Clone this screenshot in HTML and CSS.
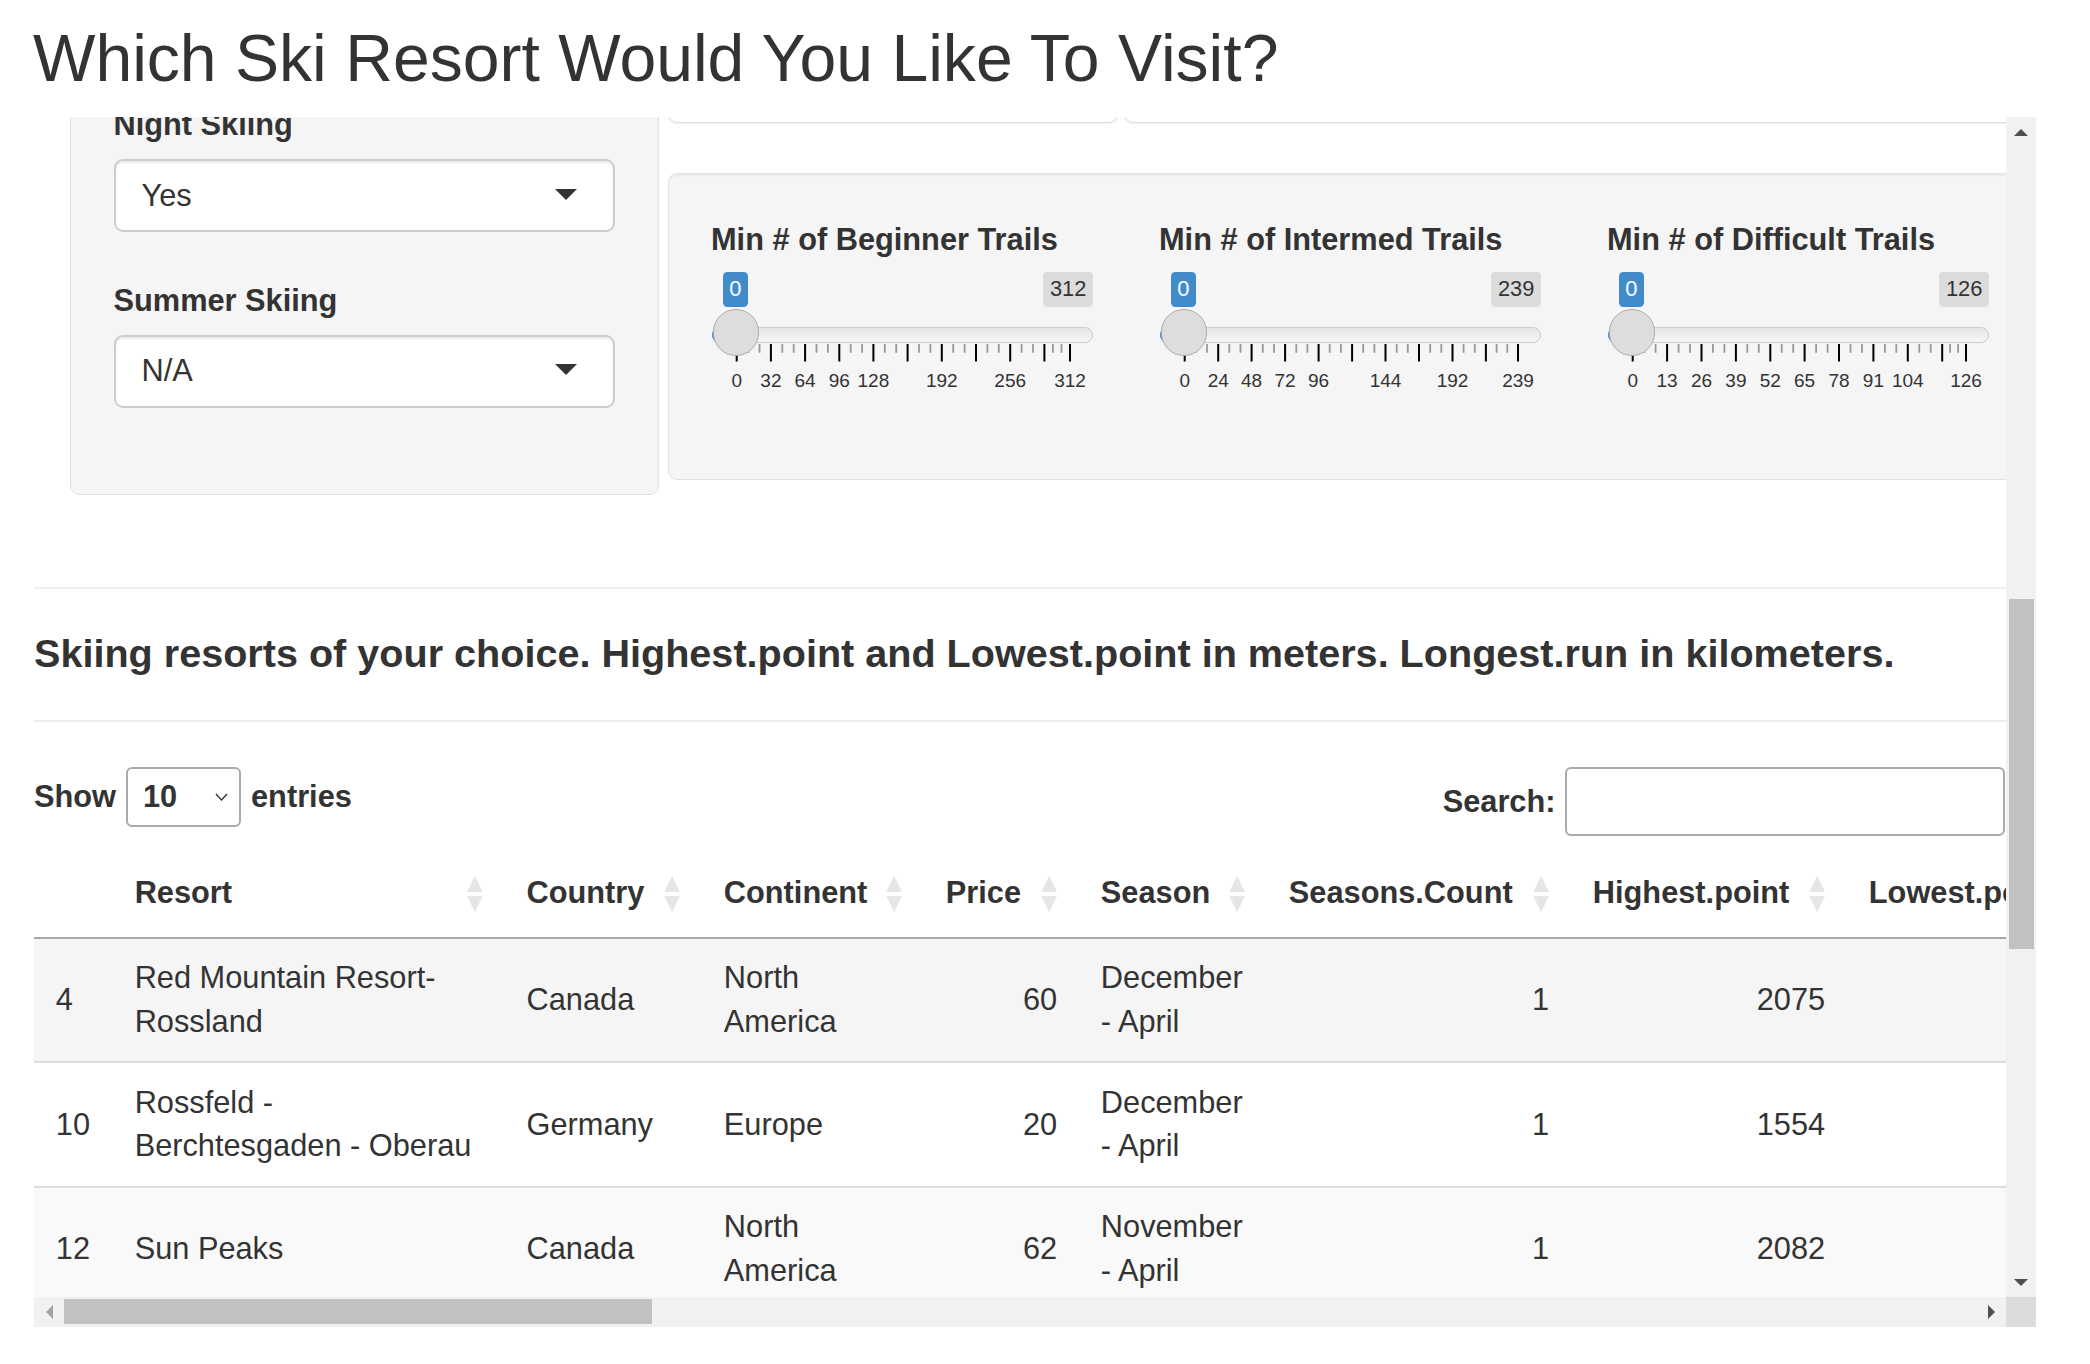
FILE: index.html
```html
<!DOCTYPE html>
<html>
<head>
<meta charset="utf-8">
<title>Ski Resorts</title>
<link rel="stylesheet" href="styles.css">
</head>
<body>
<div class="page">
  <h2 class="title">Which Ski Resort Would You Like To Visit?</h2>
  <div class="scrollbox">
    <div class="viewport">
      <div class="content">
        <div class="top-row">
          <div class="well sidebar">
            <div class="form-group">
              <label class="control-label">Night Skiing</label>
              <div class="selectize"><span>Yes</span><span class="caret"></span></div>
            </div>
            <div class="form-group">
              <label class="control-label">Summer Skiing</label>
              <div class="selectize"><span>N/A</span><span class="caret"></span></div>
            </div>
          </div>
          <div class="main">
            <div class="panels">
              <div class="panel panel-a"></div>
              <div class="panel panel-b"></div>
            </div>
            <div class="well sliders">
              <div class="slider-col">
                <label class="control-label">Min # of Beginner Trails</label>
                <div class="irs">
                  <svg class="grid" width="382" height="50" viewBox="0 0 382 50">
                    <path class="major" d="M25.7 0V17.6M59.9 0V17.6M94.1 0V17.6M128.3 0V17.6M162.4 0V17.6M196.6 0V17.6M230.8 0V17.6M265 0V17.6M299.2 0V17.6M333.4 0V17.6M359 0V17.6"/>
                    <path class="minor" d="M37.1 0V8.8M48.5 0V8.8M71.3 0V8.8M82.7 0V8.8M105.5 0V8.8M116.9 0V8.8M139.7 0V8.8M151.1 0V8.8M173.8 0V8.8M185.2 0V8.8M208 0V8.8M219.4 0V8.8M242.2 0V8.8M253.6 0V8.8M276.4 0V8.8M287.8 0V8.8M310.6 0V8.8M322 0V8.8M341.9 0V8.8M350.5 0V8.8"/>
                    <text x="25.7" y="43">0</text><text x="59.9" y="43">32</text><text x="94.1" y="43">64</text><text x="128.3" y="43">96</text><text x="162.4" y="43">128</text><text x="230.8" y="43">192</text><text x="299.2" y="43">256</text><text x="359" y="43">312</text>
                  </svg>
                  <span class="irs-line"></span>
                  <span class="irs-bar-edge"></span>
                  <span class="irs-handle"></span>
                  <span class="bubble irs-single">0</span>
                  <span class="bubble irs-max">312</span>
                </div>
              </div>
              <div class="slider-col">
                <label class="control-label">Min # of Intermed Trails</label>
                <div class="irs">
                  <svg class="grid" width="382" height="50" viewBox="0 0 382 50">
                    <path class="major" d="M25.7 0V17.6M59.2 0V17.6M92.6 0V17.6M126.1 0V17.6M159.6 0V17.6M193.1 0V17.6M226.5 0V17.6M260 0V17.6M293.5 0V17.6M326.9 0V17.6M359 0V17.6"/>
                    <path class="minor" d="M36.9 0V8.8M48 0V8.8M70.3 0V8.8M81.5 0V8.8M103.8 0V8.8M115 0V8.8M137.3 0V8.8M148.4 0V8.8M170.7 0V8.8M181.9 0V8.8M204.2 0V8.8M215.4 0V8.8M237.7 0V8.8M248.8 0V8.8M271.2 0V8.8M282.3 0V8.8M304.6 0V8.8M315.8 0V8.8M337.6 0V8.8M348.3 0V8.8"/>
                    <text x="25.7" y="43">0</text><text x="59.2" y="43">24</text><text x="92.6" y="43">48</text><text x="126.1" y="43">72</text><text x="159.6" y="43">96</text><text x="226.5" y="43">144</text><text x="293.5" y="43">192</text><text x="359" y="43">239</text>
                  </svg>
                  <span class="irs-line"></span>
                  <span class="irs-bar-edge"></span>
                  <span class="irs-handle"></span>
                  <span class="bubble irs-single">0</span>
                  <span class="bubble irs-max">239</span>
                </div>
              </div>
              <div class="slider-col">
                <label class="control-label">Min # of Difficult Trails</label>
                <div class="irs">
                  <svg class="grid" width="382" height="50" viewBox="0 0 382 50">
                    <path class="major" d="M25.7 0V17.6M60.1 0V17.6M94.5 0V17.6M128.9 0V17.6M163.3 0V17.6M197.6 0V17.6M232 0V17.6M266.4 0V17.6M300.8 0V17.6M335.2 0V17.6M359 0V17.6"/>
                    <path class="minor" d="M37.2 0V8.8M48.6 0V8.8M71.6 0V8.8M83 0V8.8M105.9 0V8.8M117.4 0V8.8M140.3 0V8.8M151.8 0V8.8M174.7 0V8.8M186.2 0V8.8M209.1 0V8.8M220.6 0V8.8M243.5 0V8.8M255 0V8.8M277.9 0V8.8M289.3 0V8.8M312.3 0V8.8M323.7 0V8.8M343.1 0V8.8M351.1 0V8.8"/>
                    <text x="25.7" y="43">0</text><text x="60.1" y="43">13</text><text x="94.5" y="43">26</text><text x="128.9" y="43">39</text><text x="163.3" y="43">52</text><text x="197.6" y="43">65</text><text x="232" y="43">78</text><text x="266.4" y="43">91</text><text x="300.8" y="43">104</text><text x="359" y="43">126</text>
                  </svg>
                  <span class="irs-line"></span>
                  <span class="irs-bar-edge"></span>
                  <span class="irs-handle"></span>
                  <span class="bubble irs-single">0</span>
                  <span class="bubble irs-max">126</span>
                </div>
              </div>
            </div>
          </div>
        </div>

        <hr class="rule rule-1">
        <h4 class="table-title">Skiing resorts of your choice. Highest.point and Lowest.point in meters. Longest.run in kilometers.</h4>
        <hr class="rule rule-2">

        <div class="dt-controls">
          <div class="dt-length">
            <span>Show</span>
            <div class="dt-select"><span>10</span>
              <svg class="chev" width="13" height="8" viewBox="0 0 13 8"><polyline points="1,1 6.5,7 12,1"/></svg>
            </div>
            <span>entries</span>
          </div>
          <div class="dt-filter">
            <span>Search:</span>
            <div class="dt-input"></div>
          </div>
        </div>

        <table class="dt">
          <colgroup>
            <col class="w-num"><col class="w-resort"><col class="w-country"><col class="w-continent"><col class="w-price"><col class="w-season"><col class="w-count"><col class="w-high"><col class="w-low">
          </colgroup>
          <thead>
            <tr>
              <th></th>
              <th class="sort">Resort</th>
              <th class="sort">Country</th>
              <th class="sort">Continent</th>
              <th class="sort">Price</th>
              <th class="sort">Season</th>
              <th class="sort">Seasons.Count</th>
              <th class="sort">Highest.point</th>
              <th class="sort">Lowest.point</th>
            </tr>
          </thead>
          <tbody>
            <tr class="row-hover">
              <td>4</td>
              <td>Red Mountain Resort-Rossland</td>
              <td>Canada</td>
              <td>North America</td>
              <td class="num">60</td>
              <td>December - April</td>
              <td class="num">1</td>
              <td class="num">2075</td>
              <td class="num">1185</td>
            </tr>
            <tr>
              <td>10</td>
              <td>Rossfeld - Berchtesgaden - Oberau</td>
              <td>Germany</td>
              <td>Europe</td>
              <td class="num">20</td>
              <td>December - April</td>
              <td class="num">1</td>
              <td class="num">1554</td>
              <td class="num">1000</td>
            </tr>
            <tr class="row-odd">
              <td>12</td>
              <td>Sun Peaks</td>
              <td>Canada</td>
              <td>North America</td>
              <td class="num">62</td>
              <td>November - April</td>
              <td class="num">1</td>
              <td class="num">2082</td>
              <td class="num">1255</td>
            </tr>
          </tbody>
        </table>
      </div>
    </div>

    <div class="vbar">
      <div class="sb-btn"><svg width="14" height="7" viewBox="0 0 14 7"><polygon class="arrow" points="0,7 14,7 7,0"/></svg></div>
      <div class="vtrack"><div class="vthumb"></div></div>
      <div class="sb-btn"><svg width="14" height="7" viewBox="0 0 14 7"><polygon class="arrow" points="0,0 14,0 7,7"/></svg></div>
    </div>
    <div class="hbar">
      <div class="sb-btn"><svg width="7" height="14" viewBox="0 0 7 14"><polygon class="arrow disabled" points="7,0 7,14 0,7"/></svg></div>
      <div class="htrack"><div class="hthumb"></div></div>
      <div class="sb-btn"><svg width="7" height="14" viewBox="0 0 7 14"><polygon class="arrow" points="0,0 0,14 7,7"/></svg></div>
    </div>
    <div class="corner"></div>
  </div>
</div>
</body>
</html>
```

FILE: styles.css
```css
html, body {
  margin: 0;
  background: #fff;
}
body {
  font-family: "Liberation Sans", Arial, sans-serif;
  font-size: 30.75px;
  line-height: 43.7px;
  color: #333;
}
.page {
  padding-left: 34px;
}
.title {
  margin: 0 0 0 -1px;
  padding: 22px 0 23px;
  font-size: 66.1px;
  line-height: 72px;
  font-weight: normal;
  white-space: nowrap;
}

/* scroll container drawn with classic scrollbars */
.scrollbox {
  display: grid;
  grid-template-columns: 1972px 30px;
  grid-template-rows: 1180px 30px;
}
.viewport {
  overflow: hidden;
}
.content {
  margin-top: -59px;
}

/* top area */
.top-row {
  display: flex;
  align-items: flex-start;
}
.well {
  background: #f5f5f5;
  border: 1px solid #e3e3e3;
  border-radius: 9px;
  box-shadow: inset 0 2px 2px rgba(0, 0, 0, 0.05);
  box-sizing: border-box;
}
.sidebar {
  flex: none;
  margin-left: 35.5px;
  width: 589px;
  height: 437px;
  padding: 42px 43px 0;
}
.control-label {
  display: block;
  font-weight: bold;
  white-space: nowrap;
}
.sidebar .control-label {
  padding-top: 2px;
  margin-bottom: 12.3px;
}
.form-group {
  margin-bottom: 44.5px;
}
.selectize {
  height: 73px;
  box-sizing: border-box;
  border: 2px solid #ccc;
  border-radius: 9px;
  background: #fff;
  box-shadow: inset 0 2px 2px rgba(0, 0, 0, 0.075);
  display: flex;
  align-items: center;
  justify-content: space-between;
  padding: 0 36px 0 26px;
}
.caret {
  width: 0;
  height: 0;
  margin-top: -3px;
  border-style: solid;
  border-width: 11px 11px 0;
  border-color: #333 transparent transparent;
}

.main {
  flex: none;
  margin-left: 9px;
}
.panels {
  display: flex;
  gap: 6.5px;
}
.panel {
  height: 65px;
  box-sizing: border-box;
  background: #fff;
  border: 1.5px solid #ddd;
  border-radius: 9px;
  box-shadow: 0 1px 2px rgba(0, 0, 0, 0.06);
}
.panel-a { width: 450px; }
.panel-b { width: 900px; }

.sliders {
  margin-top: 50px;
  width: 1380px;
  height: 307px;
  padding: 42px 0 0 42.5px;
  display: flex;
  gap: 66px;
}
.slider-col {
  flex: none;
  width: 382px;
}
.slider-col .control-label {
  padding-top: 1.5px;
  margin-bottom: 0;
}
.irs {
  position: relative;
  height: 200px;
}
.grid {
  position: absolute;
  left: 0;
  top: 82.8px;
  overflow: visible;
}
.grid .major {
  stroke: #000;
  stroke-width: 2;
  fill: none;
}
.grid .minor {
  stroke: #999;
  stroke-width: 1.8;
  fill: none;
}
.grid text {
  font-family: "Liberation Sans", Arial, sans-serif;
  font-size: 19px;
  fill: #333;
  text-anchor: middle;
}
.irs-line {
  position: absolute;
  left: 1px;
  top: 65.8px;
  width: 381px;
  height: 16px;
  box-sizing: border-box;
  border: 1.5px solid #ccc;
  border-radius: 8px;
  background: linear-gradient(to bottom, #ddd -50%, #fff 150%);
}
.irs-bar-edge {
  position: absolute;
  left: 1px;
  top: 65.8px;
  width: 24px;
  height: 16px;
  background: #428bca;
  border-radius: 8px 0 0 8px;
}
.irs-handle {
  position: absolute;
  left: 1.7px;
  top: 47.8px;
  width: 46.5px;
  height: 46.5px;
  box-sizing: border-box;
  border: 1.5px solid #aaa;
  border-radius: 50%;
  background: #ddd;
}
.bubble {
  position: absolute;
  top: 10.8px;
  font-size: 21.85px;
  line-height: 30.6px;
  padding: 2.2px 6.6px;
  border-radius: 4.4px;
}
.irs-single {
  left: 11.7px;
  background: #428bca;
  color: #fff;
}
.irs-max {
  right: 0;
  background: #dcdcdc;
  color: #333;
}

/* headings and rules */
.rule {
  border: 0;
  border-top: 2px solid #eee;
  margin: 0;
  height: 0;
}
.rule-1 { margin-top: 92px; }
.rule-2 { margin-top: 45px; }
.table-title {
  margin: 42.7px 0 0;
  font-size: 39.6px;
  line-height: 43.3px;
  font-weight: bold;
  white-space: nowrap;
}

/* datatable controls */
.dt-controls {
  margin-top: 45px;
  padding-right: 1px;
  display: flex;
  justify-content: space-between;
  align-items: flex-start;
  font-weight: bold;
}
.dt-length {
  display: flex;
  align-items: center;
  gap: 10px;
  height: 60px;
}
.dt-select {
  width: 115px;
  height: 60px;
  box-sizing: border-box;
  border: 2px solid #aaa;
  border-radius: 6px;
  background: #fff;
  display: flex;
  align-items: center;
  justify-content: space-between;
  padding: 0 11px 0 15px;
}
.chev polyline {
  fill: none;
  stroke: #333;
  stroke-width: 1.4;
}
.dt-filter {
  display: flex;
  align-items: center;
  gap: 9.5px;
}
.dt-input {
  width: 440px;
  height: 69px;
  box-sizing: border-box;
  border: 2px solid #aaa;
  border-radius: 6px;
  background: #fff;
}

/* table */
.dt {
  margin-top: 13.4px;
  border-collapse: separate;
  border-spacing: 0;
  table-layout: fixed;
  width: 2113.8px;
}
.w-num { width: 78.8px; }
.w-resort { width: 391.9px; }
.w-country { width: 197.3px; }
.w-continent { width: 222px; }
.w-price { width: 155px; }
.w-season { width: 188px; }
.w-count { width: 304px; }
.w-high { width: 276px; }
.w-low { width: 300.8px; }
.dt th {
  position: relative;
  padding: 21.85px;
  text-align: left;
  font-weight: bold;
  white-space: nowrap;
  border-bottom: 2px solid #a8a8a8;
}
.dt th.sort::before,
.dt th.sort::after {
  content: "";
  position: absolute;
  right: 21.85px;
  width: 16px;
  height: 16.5px;
  background: #e6e6e6;
}
.dt th.sort::before {
  top: 26.4px;
  clip-path: polygon(50% 0, 100% 100%, 0 100%);
}
.dt th.sort::after {
  top: 46.4px;
  clip-path: polygon(0 0, 100% 0, 50% 100%);
}
.dt td {
  padding: 17.5px 21.85px;
  vertical-align: middle;
}
.dt tbody tr + tr td {
  border-top: 2px solid #ddd;
}
.dt .num {
  text-align: right;
}
.row-hover td { background: #f5f5f5; }
.row-odd td { background: #f9f9f9; }

/* scrollbars */
.vbar {
  background: #f1f1f1;
  display: flex;
  flex-direction: column;
}
.sb-btn {
  flex: none;
  width: 30px;
  height: 30px;
  display: flex;
  align-items: center;
  justify-content: center;
}
.sb-btn svg { display: block; }
.arrow { fill: #505050; }
.arrow.disabled { fill: #a3a3a3; }
.vtrack {
  flex: 1;
  padding-top: 452px;
}
.vthumb {
  height: 350px;
  margin: 0 2.5px;
  background: #c1c1c1;
}
.hbar {
  background: #f1f1f1;
  display: flex;
}
.htrack {
  flex: 1;
  display: flex;
}
.hthumb {
  width: 588px;
  margin: 2px 0 3px;
  background: #c1c1c1;
}
.corner {
  background: #dcdcdc;
}
```
